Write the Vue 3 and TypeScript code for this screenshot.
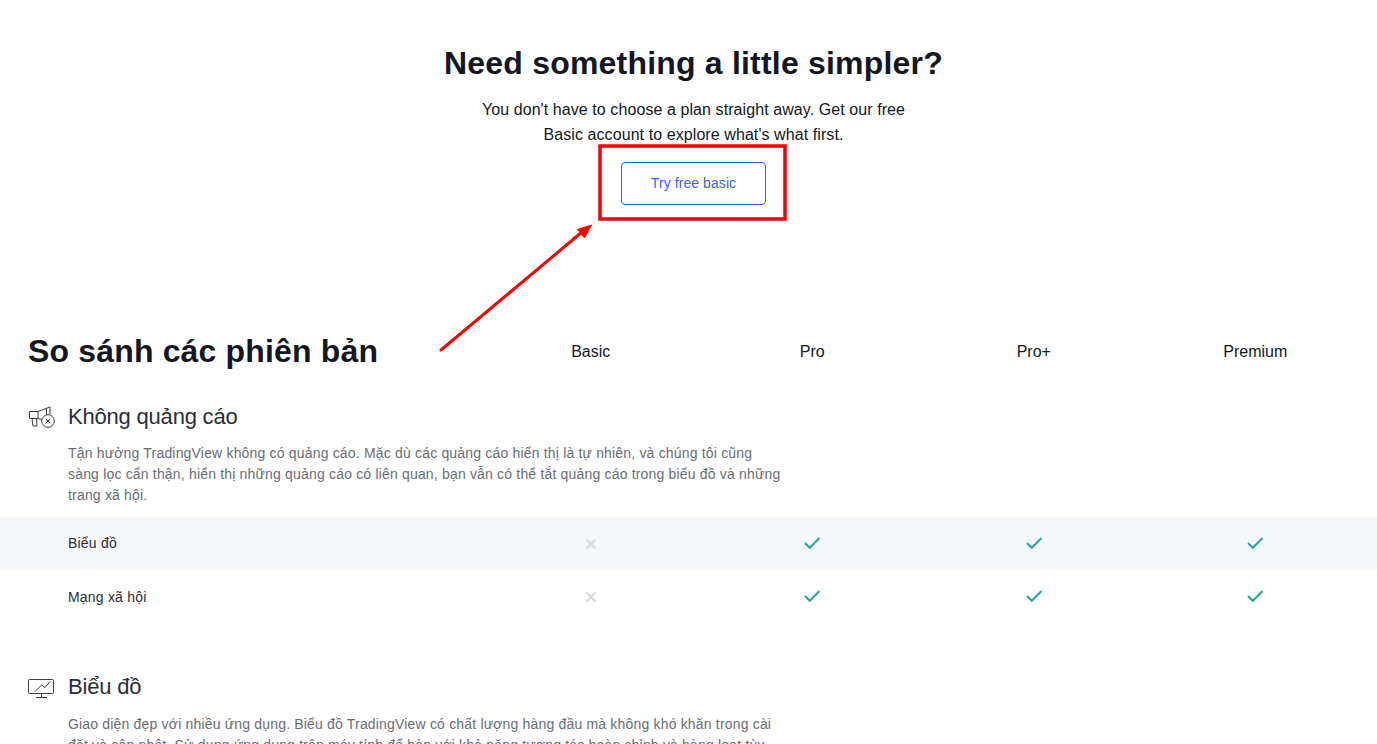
<script setup lang="ts">
const plans = ['Basic', 'Pro', 'Pro+', 'Premium']

const adRows = [
  { label: 'Biểu đồ', values: [false, true, true, true] },
  { label: 'Mạng xã hội', values: [false, true, true, true] }
]
</script>

<template>
  <div class="page">
    <section class="hero">
      <h2 class="hero-title">Need something a little simpler?</h2>
      <p class="hero-text">You don't have to choose a plan straight away. Get our free<br>Basic account to explore what's what first.</p>
      <a class="try-btn">Try free basic</a>
    </section>

    <section class="compare">
      <div class="compare-head">
        <h2 class="compare-title">So sánh các phiên bản</h2>
        <div v-for="plan in plans" :key="plan" class="plan-name">{{ plan }}</div>
      </div>

      <div class="feature first">
        <div class="feature-head">
          <svg class="feature-icon" width="28" height="28" viewBox="0 0 28 28" fill="none" stroke="#3a3e49">
            <path d="M1.500 8.500h8.500v7H1.500z" />
            <path d="M10 8.500l12-4.500v7.500M10 15.500l4 1" />
            <path d="M18.500 5.500v6.500" />
            <path d="M4 15.500l1 7.500h4l-.5-7.500" />
            <circle cx="20" cy="18" r="6.300" />
            <path d="M17.800 15.800l4.400 4.400M22.200 15.800l-4.400 4.400" />
          </svg>
          <h3 class="feature-title">Không quảng cáo</h3>
        </div>
        <p class="feature-text">Tận hưởng TradingView không có quảng cáo. Mặc dù các quảng cáo hiển thị là tự nhiên, và chúng tôi cũng sàng lọc cẩn thận, hiển thị những quảng cáo có liên quan, bạn vẫn có thể tắt quảng cáo trong biểu đồ và những trang xã hội.</p>
      </div>

      <div v-for="(row, i) in adRows" :key="row.label" class="row" :class="{ striped: i === 0 }">
        <div class="row-label">{{ row.label }}</div>
        <div v-for="(val, j) in row.values" :key="j" class="row-cell">
          <svg v-if="val" class="check" width="18" height="14" viewBox="0 0 18 14" fill="none" stroke="#26a69a" stroke-width="2">
            <path d="M2 7l4.800 4.800L16.500 2" />
          </svg>
          <svg v-else class="cross" width="12" height="12" viewBox="0 0 12 12" fill="none" stroke="#d6d8e0" stroke-width="2">
            <path d="M1.500 1.500l9 9M10.500 1.500l-9 9" />
          </svg>
        </div>
      </div>

      <div class="feature second">
        <div class="feature-head">
          <svg class="feature-icon" width="28" height="28" viewBox="0 0 28 28" fill="none" stroke="#3a3e49">
            <path d="M1.500 6.500h23a1 1 0 0 1 1 1v12a1 1 0 0 1-1 1h-23a1 1 0 0 1-1-1v-12a1 1 0 0 1 1-1z" />
            <path d="M13.500 20.500v4M8 24.500h11" />
            <path d="M7 18.500l6.700-6.500 3.300 2.700 5-6" />
          </svg>
          <h3 class="feature-title">Biểu đồ</h3>
        </div>
        <p class="feature-text">Giao diện đẹp với nhiều ứng dụng. Biểu đồ TradingView có chất lượng hàng đầu mà không khó khăn trong cài đặt và cập nhật. Sử dụng ứng dụng trên máy tính để bàn với khả năng tương tác hoàn chỉnh và hàng loạt tùy chỉnh khác nhau.</p>
      </div>
    </section>

    <!-- annotation drawn over the screenshot -->
    <svg class="annotation" width="1377" height="744" viewBox="0 0 1377 744" fill="none">
      <rect x="600" y="146" width="185" height="73" stroke="#ff0000" stroke-width="3.500" />
      <path d="M441 350L582 232" stroke="#ff0000" stroke-width="3" stroke-linecap="round" />
      <path d="M591.500 225L577.500 229.500L584.500 238z" fill="#ff0000" stroke="#ff0000" />
    </svg>
  </div>
</template>

<style>
html,
body {
  margin: 0;
  height: 100%;
  overflow: hidden;
  background: #fff;
}
</style>

<style scoped>
.page {
  position: relative;
  width: 1377px;
  height: 744px;
  overflow: hidden;
  font-family: "Liberation Sans", Arial, sans-serif;
  color: #131722;
}

.hero {
  display: flex;
  flex-direction: column;
  align-items: center;
  padding-top: 43px;
  padding-left: 10px;
  height: 286px;
  box-sizing: border-box;
}

.hero-title {
  margin: 0;
  font-size: 32px;
  line-height: 40px;
  font-weight: 700;
  letter-spacing: 0.2px;
}

.hero-text {
  margin: 14px 0 0;
  font-size: 16px;
  line-height: 25px;
  letter-spacing: 0.08px;
  text-align: center;
}

.try-btn {
  display: flex;
  align-items: center;
  justify-content: center;
  margin-top: 15px;
  width: 145px;
  height: 43px;
  box-sizing: border-box;
  border: 1px solid #2962ff;
  border-radius: 4px;
  padding-bottom: 2px;
  font-size: 14px;
  letter-spacing: 0.08px;
  color: #3c5fff;
}

.compare-head,
.row {
  display: grid;
  grid-template-columns: 1fr repeat(4, 221.5px);
  padding-right: 11px;
  align-items: center;
}

.compare-head {
  padding-left: 28px;
  height: 50px;
  margin-top: 40px;
}

.compare-title {
  margin: 0;
  font-size: 32px;
  line-height: 40px;
  font-weight: 700;
  letter-spacing: 0.16px;
  white-space: nowrap;
}

.plan-name {
  padding-top: 2px;
  text-align: center;
  font-size: 16px;
}

.feature {
  padding-left: 28px;
}

.feature.first {
  margin-top: 25px;
}

.feature.second {
  margin-top: 48px;
}

.feature.second .feature-text {
  margin-top: 11px;
}

.feature-head {
  display: flex;
  align-items: center;
  height: 32px;
}

.feature-icon {
  margin-right: 12px;
}

.feature-title {
  margin: 0;
  font-size: 22px;
  line-height: 32px;
  font-weight: 400;
  letter-spacing: -0.2px;
  color: #2a2e39;
}

.feature-text {
  margin: 10px 0 0 40px;
  width: 714px;
  font-size: 14px;
  line-height: 21px;
  letter-spacing: 0.18px;
  color: #6a6d78;
}

.row {
  height: 53px;
  padding-left: 68px;
}

.row.striped {
  margin-top: 11px;
  background: #f7f8fc;
}

.row.striped .row-label {
  padding-bottom: 2px;
}

.row-label {
  font-size: 14px;
  letter-spacing: 0.2px;
  color: #2a2e39;
}

.row-cell {
  display: flex;
  justify-content: center;
  align-items: center;
}

.check {
  margin-bottom: 1px;
}

.cross {
  margin-top: 1px;
}

.annotation {
  position: absolute;
  left: 0;
  top: 0;
  pointer-events: none;
}
</style>
